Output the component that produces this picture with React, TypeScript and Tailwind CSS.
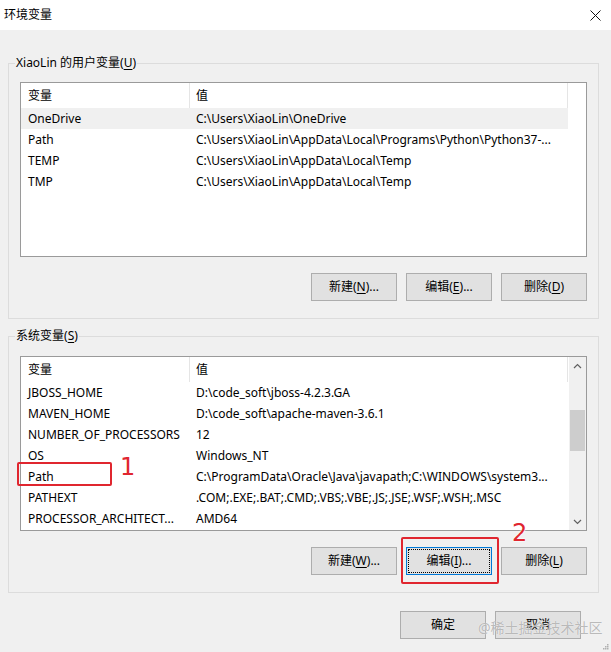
const font = "font-['Noto_Sans','Noto_Sans_CJK_SC',sans-serif]"

const userVars: [string, string][] = [
  ['OneDrive', 'C:\\Users\\XiaoLin\\OneDrive'],
  ['Path', 'C:\\Users\\XiaoLin\\AppData\\Local\\Programs\\Python\\Python37-...'],
  ['TEMP', 'C:\\Users\\XiaoLin\\AppData\\Local\\Temp'],
  ['TMP', 'C:\\Users\\XiaoLin\\AppData\\Local\\Temp'],
]

const systemVars: [string, string][] = [
  ['JBOSS_HOME', 'D:\\code_soft\\jboss-4.2.3.GA'],
  ['MAVEN_HOME', 'D:\\code_soft\\apache-maven-3.6.1'],
  ['NUMBER_OF_PROCESSORS', '12'],
  ['OS', 'Windows_NT'],
  ['Path', 'C:\\ProgramData\\Oracle\\Java\\javapath;C:\\WINDOWS\\system3...'],
  ['PATHEXT', '.COM;.EXE;.BAT;.CMD;.VBS;.VBE;.JS;.JSE;.WSF;.WSH;.MSC'],
  ['PROCESSOR_ARCHITECT...', 'AMD64'],
]

function Key({ label, k, tail = '' }: { label: string; k: string; tail?: string }) {
  return (
    <>
      {label}(<span className="underline underline-offset-2">{k}</span>){tail}
    </>
  )
}

function WinButton({ children, focused = false }: { children: React.ReactNode; focused?: boolean }) {
  return (
    <button
      type="button"
      className={[
        'flex h-[28px] w-[86px] items-center justify-center border bg-[#e1e1e1] text-[12px] text-black',
        focused
          ? 'border-[#0078d7] outline-1 outline-offset-[-3px] outline-dotted outline-black'
          : 'border-[#adadad]',
      ].join(' ')}
    >
      {children}
    </button>
  )
}

function VarList({
  rows,
  selected,
  scroll = false,
}: {
  rows: [string, string][]
  selected?: number
  scroll?: boolean
}) {
  return (
    <div className="flex h-[175px] border border-[#9a9a9a] bg-white">
      <div className="flex w-[547px] flex-col">
        <div className="flex h-[25px] items-center">
          <div className="flex h-full w-[169px] items-center border-r border-[#e5e5e5] pl-[7px]">变量</div>
          <div className="flex h-full w-[378px] items-center border-r border-[#e5e5e5] pl-[6px]">值</div>
        </div>
        {rows.map(([name, value], i) => (
          <div
            key={name + i}
            className={[
              'flex h-[21px] items-center whitespace-nowrap',
              i === selected ? 'bg-[#f0f0f0]' : '',
            ].join(' ')}
          >
            <div className="w-[169px] overflow-hidden pl-[7px]">{name}</div>
            <div className="w-[378px] overflow-hidden pl-[6px]">{value}</div>
          </div>
        ))}
      </div>
      {scroll ? (
        <div className="ml-auto flex w-[17px] flex-col items-center bg-[#f0f0f0]">
          <div className="flex h-[17px] w-full items-center justify-center">
            <svg width="9" height="6" viewBox="0 0 9 6">
              <polyline points="1,5 4.5,1.5 8,5" fill="none" stroke="#606060" strokeWidth="1.2" />
            </svg>
          </div>
          <div className="mt-[36px] h-[41px] w-[15px] bg-[#cdcdcd]" />
          <div className="mt-auto flex h-[17px] w-full items-center justify-center">
            <svg width="9" height="6" viewBox="0 0 9 6">
              <polyline points="1,1 4.5,4.5 8,1" fill="none" stroke="#606060" strokeWidth="1.2" />
            </svg>
          </div>
        </div>
      ) : null}
    </div>
  )
}

function Group({ legend, children }: { legend: React.ReactNode; children: React.ReactNode }) {
  return (
    <fieldset className="border border-[#dcdcdc] px-[11px] pb-[17px]">
      <legend className="ml-[-5px] px-[1px] text-[12px] leading-4">{legend}</legend>
      {children}
    </fieldset>
  )
}

function Marker({ n }: { n: string }) {
  return (
    <span className="font-['DejaVu_Sans',sans-serif] text-[24px] leading-none text-[#e0262f] [text-shadow:0_0_2px_#fff,0_0_2px_#fff]">
      {n}
    </span>
  )
}

export default function App() {
  return (
    <div className={`relative flex h-[652px] w-[611px] flex-col overflow-hidden bg-[#f0f0f0] text-[12px] text-black ${font}`}>
      <div className="flex h-[30px] shrink-0 items-center justify-between bg-white pl-[4px] pr-[10px]">
        <span>环境变量</span>
        <svg width="11" height="11" viewBox="0 0 11 11">
          <path d="M0.5 0.5 L10.5 10.5 M10.5 0.5 L0.5 10.5" stroke="#111" strokeWidth="1" />
        </svg>
      </div>

      <div className="flex flex-col pl-[8px] pr-[12px] pt-[25px]">
        <Group legend={<Key label="XiaoLin 的用户变量" k="U" />}>
          <div className="mt-[11px]">
            <VarList rows={userVars} selected={0} />
          </div>
          <div className="mt-[16px] flex justify-end gap-[9px]">
            <WinButton><Key label="新建" k="N" tail="..." /></WinButton>
            <WinButton><Key label="编辑" k="E" tail="..." /></WinButton>
            <WinButton><Key label="删除" k="D" /></WinButton>
          </div>
        </Group>

        <div className="mt-[9px]">
          <Group legend={<Key label="系统变量" k="S" />}>
            <div className="mt-[12px]">
              <VarList rows={systemVars} scroll />
            </div>
            <div className="mt-[16px] flex justify-end gap-[9px]">
              <WinButton><Key label="新建" k="W" tail="..." /></WinButton>
              <WinButton focused><Key label="编辑" k="I" tail="..." /></WinButton>
              <WinButton><Key label="删除" k="L" /></WinButton>
            </div>
          </Group>
        </div>
      </div>

      <div className="mt-[18px] flex justify-end gap-[9px] pr-[30px]">
        <WinButton>确定</WinButton>
        <WinButton>取消</WinButton>
      </div>

      {/* annotations */}
      <div className="absolute left-[17px] top-[462px] h-[24px] w-[95px] rounded-[2px] border-2 border-[#e0262f]" />
      <div className="absolute left-[120px] top-[455px]"><Marker n="1" /></div>
      <div className="absolute left-[401px] top-[537px] h-[47px] w-[98px] rounded-[2px] border-2 border-[#e0262f]" />
      <div className="absolute left-[512px] top-[521px]"><Marker n="2" /></div>

      <div className="absolute left-[478px] top-[617px] text-[14px] text-[#a8a8a8]/80 [text-shadow:0_0_1px_#fff]">
        @稀土掘金技术社区
      </div>

      <svg className="absolute bottom-[2px] right-[2px]" width="6" height="6" viewBox="0 0 6 6">
        <rect x="4" y="0" width="1.5" height="1.5" fill="#b0b0b0" />
        <rect x="2" y="2" width="1.5" height="1.5" fill="#b0b0b0" />
        <rect x="4" y="2" width="1.5" height="1.5" fill="#b0b0b0" />
        <rect x="0" y="4" width="1.5" height="1.5" fill="#b0b0b0" />
        <rect x="2" y="4" width="1.5" height="1.5" fill="#b0b0b0" />
        <rect x="4" y="4" width="1.5" height="1.5" fill="#b0b0b0" />
      </svg>
    </div>
  )
}
